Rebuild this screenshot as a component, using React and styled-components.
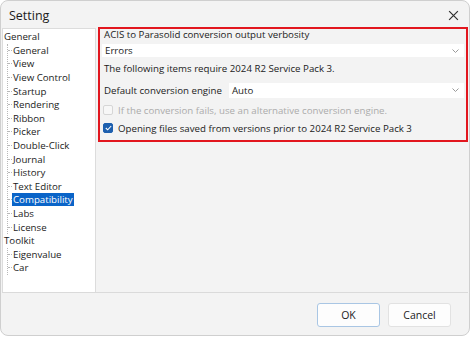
import React from "react";
import styled, { createGlobalStyle } from "styled-components";

const GlobalStyle = createGlobalStyle`
    html, body {
        margin: 0;
        padding: 0;
        background: #ffffff;
    }
    body {
        font-family: "Open Sans", "Noto Sans", sans-serif;
        font-size: 9.7px;
        color: #1b1b1b;
    }
`;

const tree = [
    {
        title: "General",
        children: [
            "General",
            "View",
            "View Control",
            "Startup",
            "Rendering",
            "Ribbon",
            "Picker",
            "Double-Click",
            "Journal",
            "History",
            "Text Editor",
            "Compatibility",
            "Labs",
            "License",
        ],
    },
    { title: "Toolkit", children: ["Eigenvalue", "Car"] },
];

const Window = styled.div`
    width: 470px;
    height: 336px;
    box-sizing: border-box;
    border: 1px solid #cfcfcf;
    border-radius: 8px;
    background: #f3f3f3;
    display: flex;
    flex-direction: column;
    overflow: hidden;
`;

const TitleBar = styled.div`
    height: 26px;
    flex: 0 0 26px;
    display: flex;
    align-items: center;
    justify-content: space-between;
    padding: 2px 10px 0 8px;
    box-sizing: border-box;
    font-size: 12.5px;
`;

const CloseIcon = styled.svg`
    width: 11px;
    height: 11px;
`;

const Body = styled.div`
    flex: 1;
    display: flex;
    padding: 0 1px 0 1px;
    gap: 2px;
`;

const Tree = styled.div`
    width: 91px;
    margin-top: 1px;
    background: #ffffff;
    border: 1px solid #dcdcdc;
    border-bottom: none;
    padding: 1px 0 0 1px;
`;

const Node = styled.div`
    height: 13.6px;
    line-height: 13.6px;
    white-space: nowrap;
`;

const Group = styled.div`
    margin-left: 3px;
    border-left: 1px dotted #b8b8b8;
`;

const Leaf = styled.div`
    height: 13.6px;
    line-height: 13.6px;
    white-space: nowrap;
    display: flex;
    align-items: center;

    &::before {
        content: "";
        width: 4px;
        border-top: 1px dotted #b8b8b8;
    }
`;

const LeafText = styled.span`
    padding: 0 1px;
    line-height: 13px;
    background: ${(p) => (p.$selected ? "#0a64c8" : "transparent")};
    color: ${(p) => (p.$selected ? "#ffffff" : "inherit")};
`;

const Content = styled.div`
    flex: 1;
    display: flex;
    flex-direction: column;
`;

const Highlight = styled.div`
    border: 2px solid #e2161e;
    padding: 0 2px 3px 2px;
    display: flex;
    flex-direction: column;
`;

const Label = styled.div`
    height: ${(p) => p.$h || 11}px;
    line-height: ${(p) => p.$h || 11}px;
    margin-top: ${(p) => p.$mt || 0}px;
    padding: 0 2px;
    white-space: nowrap;
`;

const Row = styled.div`
    display: flex;
    align-items: center;
    gap: 7px;
    padding-left: 2px;
    margin-top: 7px;
    height: 16px;
`;

const Select = styled.div`
    flex: 1;
    height: 15px;
    background: #ffffff;
    display: flex;
    align-items: center;
    justify-content: space-between;
    padding: 0 5px 0 3px;
    margin-top: ${(p) => p.$mt || 0}px;
`;

const Chevron = styled.svg`
    width: 7px;
    height: 4px;
`;

const CheckRow = styled.label`
    display: flex;
    align-items: center;
    gap: 5px;
    height: 18px;
    margin-top: ${(p) => p.$mt || 0}px;
    padding-left: 1px;
    white-space: nowrap;
    color: ${(p) => (p.$disabled ? "#ababab" : "inherit")};
`;

const Box = styled.span`
    width: 10px;
    height: 10px;
    box-sizing: border-box;
    border-radius: 2px;
    border: 1px solid ${(p) => (p.$checked ? "#1d5fae" : "#d6d6d6")};
    background: ${(p) => (p.$checked ? "#1d5fae" : "#f7f7f7")};
    display: flex;
    align-items: center;
    justify-content: center;
`;

const Separator = styled.div`
    height: 1px;
    background: #dadada;
    margin: 0 1px;
`;

const Footer = styled.div`
    height: 42px;
    flex: 0 0 42px;
    display: flex;
    justify-content: flex-end;
    align-items: center;
    gap: 8px;
    padding-right: 18px;
`;

const Button = styled.button`
    width: 63px;
    height: 24px;
    font: inherit;
    font-size: 10.5px;
    color: #1b1b1b;
    background: #fdfdfd;
    border: 1px solid ${(p) => (p.$primary ? "#a9c6e4" : "#e2e2e2")};
    border-radius: 3px;
    margin-top: 1px;
`;

const ChevronDown = () => (
    <Chevron viewBox="0 0 7 4">
        <path d="M0.5 0.5 L3.5 3.5 L6.5 0.5" fill="none" stroke="#9a9a9a" />
    </Chevron>
);

export default function App() {
    return (
        <>
            <GlobalStyle />
            <Window>
                <TitleBar>
                    <span>Setting</span>
                    <CloseIcon viewBox="0 0 10 10">
                        <path d="M1 1 L9 9 M9 1 L1 9" stroke="#333" strokeWidth="1.1" />
                    </CloseIcon>
                </TitleBar>
                <Body>
                    <Tree>
                        {tree.map((g) => (
                            <div key={g.title}>
                                <Node>{g.title}</Node>
                                <Group>
                                    {g.children.map((c) => (
                                        <Leaf key={c}>
                                            <LeafText $selected={c === "Compatibility"}>{c}</LeafText>
                                        </Leaf>
                                    ))}
                                </Group>
                            </div>
                        ))}
                    </Tree>
                    <Content>
                        <Highlight>
                            <Label $h={12}>ACIS to Parasolid conversion output verbosity</Label>
                            <Select $mt={3}>
                                <span>Errors</span>
                                <ChevronDown />
                            </Select>
                            <Label $h={12} $mt={6}>
                                The following items require 2024 R2 Service Pack 3.
                            </Label>
                            <Row>
                                <span>Default conversion engine</span>
                                <Select>
                                    <span>Auto</span>
                                    <ChevronDown />
                                </Select>
                            </Row>
                            <CheckRow $disabled $mt={3}>
                                <Box />
                                If the conversion fails, use an alternative conversion engine.
                            </CheckRow>
                            <CheckRow>
                                <Box $checked>
                                    <svg width="7" height="6" viewBox="0 0 7 6">
                                        <path d="M0.8 3 L2.7 4.8 L6.2 1" fill="none" stroke="#fff" strokeWidth="1.1" />
                                    </svg>
                                </Box>
                                Opening files saved from versions prior to 2024 R2 Service Pack 3
                            </CheckRow>
                        </Highlight>
                    </Content>
                </Body>
                <Separator />
                <Footer>
                    <Button $primary>OK</Button>
                    <Button>Cancel</Button>
                </Footer>
            </Window>
        </>
    );
}
